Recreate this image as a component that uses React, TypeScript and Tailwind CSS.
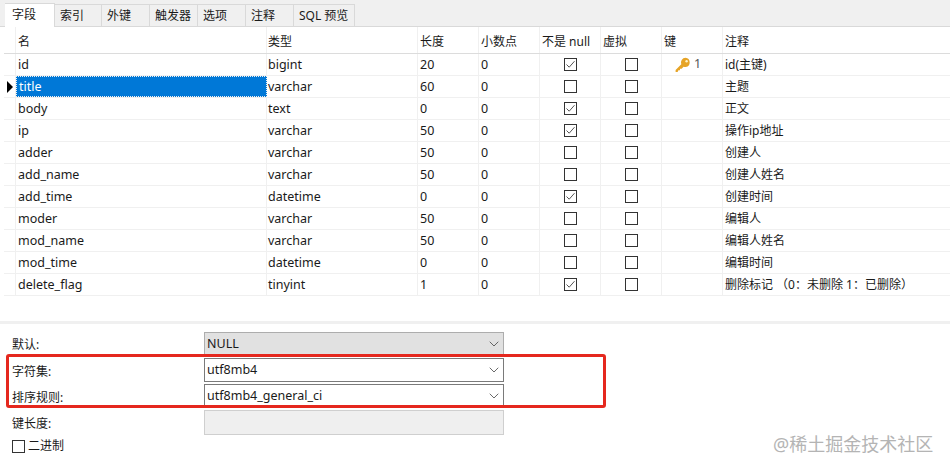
import { ChevronDown } from "lucide-react"

const font = "[font-family:'Noto_Sans','Noto_Sans_CJK_SC',sans-serif]"

const rows = [
    { name: "id", type: "bigint", len: "20", notNull: true, key: true, note: "id(主键)" },
    { name: "title", type: "varchar", len: "60", notNull: false, note: "主题" },
    { name: "body", type: "text", len: "0", notNull: true, note: "正文" },
    { name: "ip", type: "varchar", len: "50", notNull: true, note: "操作ip地址" },
    { name: "adder", type: "varchar", len: "50", notNull: false, note: "创建人" },
    { name: "add_name", type: "varchar", len: "50", notNull: false, note: "创建人姓名" },
    { name: "add_time", type: "datetime", len: "0", notNull: true, note: "创建时间" },
    { name: "moder", type: "varchar", len: "50", notNull: false, note: "编辑人" },
    { name: "mod_name", type: "varchar", len: "50", notNull: false, note: "编辑人姓名" },
    { name: "mod_time", type: "datetime", len: "0", notNull: false, note: "编辑时间" },
    { name: "delete_flag", type: "tinyint", len: "1", notNull: true, note: "删除标记 （0：未删除 1：已删除）" },
]

const tabs = [
    { label: "字段", w: "w-[50px]" },
    { label: "索引", w: "w-[47px]" },
    { label: "外键", w: "w-[48px]" },
    { label: "触发器", w: "w-[48px]" },
    { label: "选项", w: "w-[48px]" },
    { label: "注释", w: "w-[48px]" },
    { label: "SQL 预览", w: "w-[61px]" },
]

function Check({ checked }: { checked?: boolean }) {
    return (
        <span className="flex h-[13px] w-[13px] items-center justify-center border border-[#333] bg-white">
            {checked && (
                <svg width="11" height="11" viewBox="0 0 11 11" fill="none">
                    <path d="M1.5 5.5 L4.2 8.2 L9.5 2.2" stroke="#555" strokeWidth="1" />
                </svg>
            )}
        </span>
    )
}

function KeyIcon() {
    return (
        <svg width="16" height="16" viewBox="0 0 16 16">
            <path d="M10.5 0.8 a4.7 4.7 0 0 1 0.3 9.3 a4.7 4.7 0 0 1 -2.2 -0.4 L6.6 11.7 L5 11.7 L5 13.3 L3.4 13.3 L2.6 15 L0.6 15 L0.6 13 L6.3 7.3 a4.7 4.7 0 0 1 4.2 -6.5 Z" fill="#e6a427" />
            <circle cx="11.6" cy="4.2" r="1.2" fill="#fff3c8" />
        </svg>
    )
}

function Cell({ w, className = "", children }: { w: string; className?: string; children?: React.ReactNode }) {
    return <div className={`${w} h-full shrink-0 border-r border-[#f0f0f0] ${className}`}>{children}</div>
}

function Select({ value, className }: { value: string; className: string }) {
    return (
        <div className={`flex w-[300px] items-center justify-between pl-[2px] pr-[1px] ${className}`}>
            <span className="pt-[1px]">{value}</span>
            <ChevronDown size={16} strokeWidth={1.2} className="text-[#444]" />
        </div>
    )
}

export default function App() {
    return (
        <div className={`relative h-[468px] w-[950px] overflow-hidden bg-white text-[12.5px] text-[#1a1a1a] ${font}`}>
            <div className="flex h-[27px] items-end border-b border-[#d9d9d9] bg-[#f0f0f0] pl-[5px] text-[12px]">
                {tabs.map((t, i) => (
                    <div
                        key={t.label}
                        className={`${t.w} flex items-center border-r border-t border-[#d9d9d9] pl-[5px] ${i === 0 ? "-mb-px h-[24px] bg-white pl-[7px] pb-[2px]" : "h-[22px] bg-[#f0f0f0]"}`}
                    >
                        {t.label}
                    </div>
                ))}
            </div>

            <div className="ml-[4px] h-[294px]">
                <div className="flex h-[27px] items-center border-b border-[#dcdcdc] text-[12px]">
                    <Cell w="w-[12px]" />
                    <Cell w="w-[251px]" className="flex items-center pl-[2px] pt-[3px]">名</Cell>
                    <Cell w="w-[151px]" className="flex items-center pl-[1px] pt-[3px]">类型</Cell>
                    <Cell w="w-[61px]" className="flex items-center pl-[2px] pt-[3px]">长度</Cell>
                    <Cell w="w-[61px]" className="flex items-center pl-[2px] pt-[3px]">小数点</Cell>
                    <Cell w="w-[61px]" className="flex items-center pl-[2px] pt-[3px]">不是 null</Cell>
                    <Cell w="w-[61px]" className="flex items-center pl-[2px] pt-[3px]">虚拟</Cell>
                    <Cell w="w-[61px]" className="flex items-center pl-[2px] pt-[3px]">键</Cell>
                    <div className="pl-[2px] pt-[3px]">注释</div>
                </div>
                {rows.map((r) => (
                    <div key={r.name} className="flex h-[22px] items-center border-b border-[#f0f0f0]">
                        <Cell w="w-[12px]" className="flex items-center justify-end pr-[2px]">
                            {r.name === "title" && (
                                <svg width="6" height="12" viewBox="0 0 6 12">
                                    <path d="M0 0 L6 6 L0 12 Z" fill="#000" />
                                </svg>
                            )}
                        </Cell>
                        <Cell
                            w="w-[251px]"
                            className={`flex items-center pl-[2px] pt-[1px] ${r.name === "title" ? "border border-dotted border-[#1a1a1a] bg-[#0078d7] text-white" : ""}`}
                        >
                            {r.name}
                        </Cell>
                        <Cell w="w-[151px]" className="flex items-center pl-[1px] pt-[1px]">{r.type}</Cell>
                        <Cell w="w-[61px]" className="flex items-center pl-[2px] pt-[1px]">{r.len}</Cell>
                        <Cell w="w-[61px]" className="flex items-center pl-[2px] pt-[1px]">0</Cell>
                        <Cell w="w-[61px]" className="flex items-center justify-center">
                            <Check checked={r.notNull} />
                        </Cell>
                        <Cell w="w-[61px]" className="flex items-center justify-center">
                            <Check />
                        </Cell>
                        <Cell w="w-[61px]" className="flex items-center gap-[3px] pl-[13px] text-[#555]">
                            {r.key && (
                                <>
                                    <KeyIcon />
                                    <span>1</span>
                                </>
                            )}
                        </Cell>
                        <div className="whitespace-pre pl-[2px] pt-[1px] text-[12px]">{r.note}</div>
                    </div>
                ))}
            </div>

            <div className="h-[3px] bg-[#f0f0f0]" />

            <div className="grid grid-cols-[204px_300px] content-start pt-[8px] text-[12px]">
                <div className="flex h-[23px] items-center pl-[12px] pt-[3px]">默认:</div>
                <Select value="NULL" className="h-[23px] border border-[#adadad] bg-[#e1e1e1] text-[12.5px]" />
                <div className="mt-[3px] flex h-[24px] items-center pl-[12px] pt-[3px]">字符集:</div>
                <Select value="utf8mb4" className="mt-[3px] h-[24px] border border-[#7a7a7a] bg-white text-[12.5px]" />
                <div className="mt-[2px] flex h-[24px] items-center pl-[12px] pt-[3px]">排序规则:</div>
                <Select value="utf8mb4_general_ci" className="mt-[2px] h-[24px] border border-[#7a7a7a] bg-white text-[12.5px]" />
                <div className="mt-[2px] flex h-[25px] items-center pl-[12px] pt-[3px]">键长度:</div>
                <div className="mt-[2px] h-[25px] border border-[#cfcfcf] bg-[#efefef]" />
                <div className="col-span-2 mt-[2px] flex items-center gap-[3px] pl-[12px]">
                    <Check />
                    <span>二进制</span>
                </div>
            </div>

            <div className="absolute left-[6px] top-[354px] h-[54px] w-[600px] rounded-[3px] border-[3px] border-[#e5281e]" />
            <div className="absolute left-[773px] top-[431px] text-[18px] leading-[26px] text-[#b4b4b4]">@稀土掘金技术社区</div>
        </div>
    )
}
